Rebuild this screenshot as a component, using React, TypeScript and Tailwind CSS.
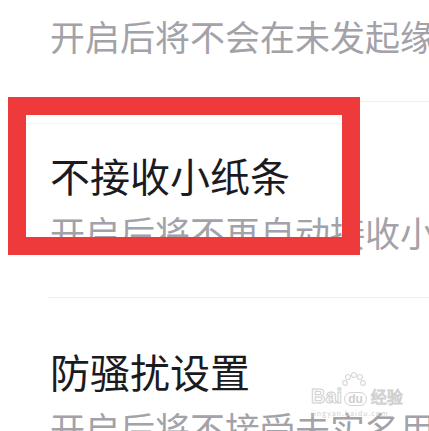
const rows = [
  { title: "不接收陌生消息", desc: "开启后将不会在未发起缘分匹配的情况下收到消息" },
  { title: "不接收小纸条", desc: "开启后将不再自动接收小纸条" },
  { title: "防骚扰设置", desc: "开启后将不接受未实名用户的消息" },
];

function BaiduMark() {
  return (
    <div className="pointer-events-none absolute left-[311px] top-[372px] flex flex-col items-start text-[#d6d6d6]">
      <svg width="30" height="18" viewBox="0 0 30 18" className="ml-[28px]" fill="none" stroke="#d9d9d9" strokeWidth="1.2">
        <circle cx="9" cy="5" r="2.5" />
        <circle cx="15" cy="3" r="2.5" />
        <circle cx="21" cy="5" r="2.5" />
        <circle cx="6" cy="11" r="2.3" />
        <circle cx="24" cy="11" r="2.3" />
      </svg>
      <div className="-mt-[4px] flex items-end gap-[2px] leading-none" style={{ fontFamily: "'Liberation Sans', 'Noto Sans CJK SC', sans-serif" }}>
        <span className="text-[20px] font-bold text-white [-webkit-text-stroke:1px_#cfcfcf]">Bai</span>
        <span className="rounded-full border border-[#d2d2d2] px-[3px] text-[12px] font-bold text-[#cfcfcf]">du</span>
        <span className="ml-[2px] text-[16px] text-white [-webkit-text-stroke:1px_#cfcfcf]">经验</span>
      </div>
      <div className="mt-[2px] text-[7px] tracking-[1px] text-[#cfcfcf]">jingyan.baidu.com</div>
    </div>
  );
}

export default function App() {
  return (
    <div
      className="relative h-[431px] w-[429px] overflow-hidden bg-white"
      style={{ fontFamily: "'Noto Sans CJK SC', 'Noto Sans', sans-serif" }}
    >
      <div className="-mt-[95px] pl-[48px]">
        {rows.map((row) => (
          <div key={row.title} className="border-t border-[#f1f1f3] pb-[37px] pt-[44px]">
            <div className="whitespace-nowrap pl-[2px] text-[40px] leading-[58px] text-[#1b1b1f]">{row.title}</div>
            <div className="whitespace-nowrap pl-[2px] text-[35px] leading-[56px] text-[#a2a2a8]">{row.desc}</div>
          </div>
        ))}
      </div>

      <BaiduMark />

      {/* red highlight box */}
      <div className="absolute left-[8px] top-[97px] h-[158px] w-[352px] border-[18px] border-[#ee3a3b]">
        <div className="mt-[8px] h-px bg-[#f4f4f4]" />
      </div>
    </div>
  );
}
